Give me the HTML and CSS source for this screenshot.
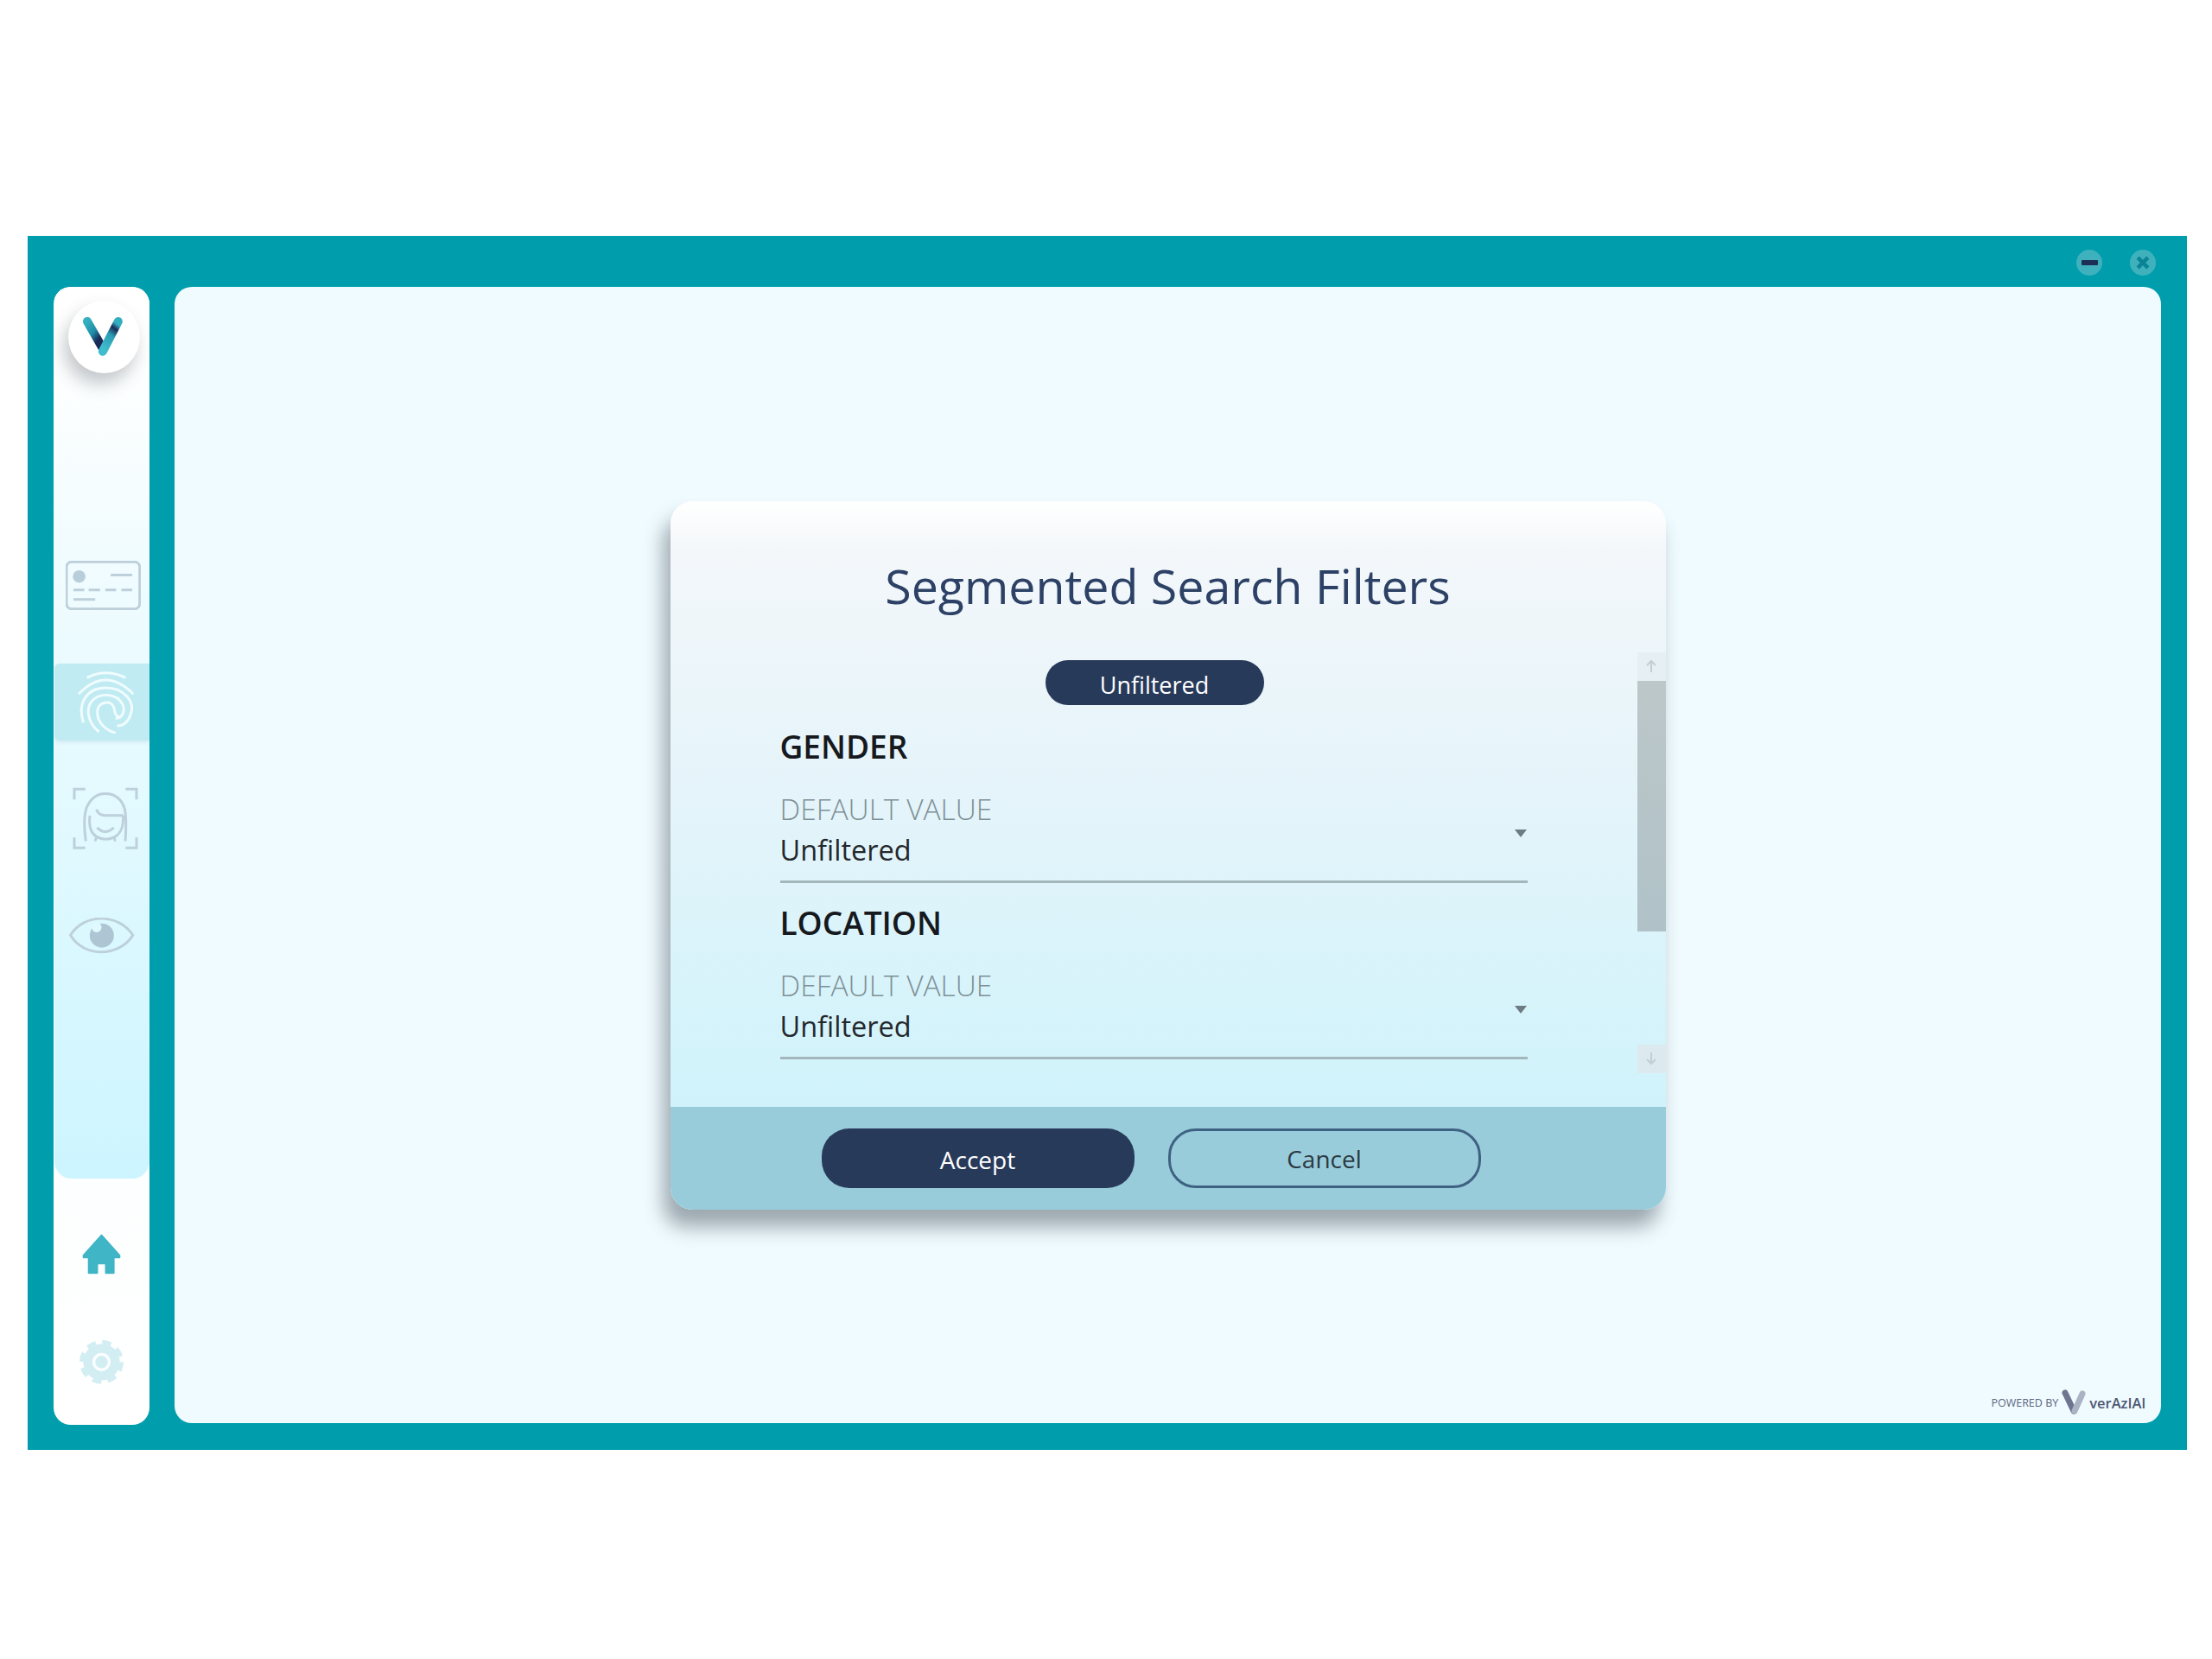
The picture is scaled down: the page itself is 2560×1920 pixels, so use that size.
FILE: index.html
```html
<!DOCTYPE html>
<html lang="en">
<head>
<meta charset="utf-8">
<title>Segmented Search Filters</title>
<link rel="stylesheet" href="styles.css">
</head>
<body>
<div class="window">
  <header class="titlebar">
    <button class="win-btn" aria-label="Minimize"><span class="win-min"></span></button>
    <button class="win-btn" aria-label="Close">
      <svg class="win-close" viewBox="0 0 20 20"><path d="M3.5 3.5 16.5 16.5M16.5 3.5 3.5 16.5"/></svg>
    </button>
  </header>
  <div class="workspace">
    <aside class="sidebar">
      <div class="sidebar-top">
        <div class="logo">
          <svg class="logo-v" viewBox="0 0 50 50">
            <defs>
              <linearGradient id="vl" x1="0" y1="0" x2="0.7" y2="1">
                <stop offset="0" stop-color="#35aebf"/><stop offset="0.45" stop-color="#1f8ea8"/><stop offset="0.78" stop-color="#1a2a58"/><stop offset="1" stop-color="#1a2a58"/>
              </linearGradient>
              <linearGradient id="vr" x1="0.3" y1="1" x2="0.7" y2="0">
                <stop offset="0" stop-color="#3fbccd"/><stop offset="0.55" stop-color="#2b9db4"/><stop offset="0.82" stop-color="#1a2a58"/><stop offset="1" stop-color="#33adc0"/>
              </linearGradient>
            </defs>
            <path d="M8 8 24 36" fill="none" stroke="url(#vl)" stroke-width="9" stroke-linecap="round"/>
            <path d="M24 39 40 8" fill="none" stroke="url(#vr)" stroke-width="9" stroke-linecap="round"/>
          </svg>
        </div>
        <nav class="nav">
          <div class="nav-item">
            <svg class="icon icon-card" viewBox="228 1168 262 170">
              <rect x="231" y="1171" width="255" height="164" rx="18"/>
              <circle class="solid" cx="275" cy="1222" r="22"/>
              <path d="M385 1217h75M255 1269h38M308 1269h40M366 1269h38M422 1269h38M255 1302h76"/>
            </svg>
          </div>
          <div class="nav-item is-active">
            <svg class="icon icon-print" viewBox="266 286 200 220">
              <path d="M300 311Q365 278 435 311"/>
              <path d="M271 368Q365 270 462 368"/>
              <path d="M288 468C265 400 300 346 365 346C430 346 470 395 452 440C445 465 425 480 405 479"/>
              <path d="M342 500C305 470 295 425 315 395C345 360 405 365 425 405C435 430 420 455 400 452"/>
              <path d="M400 504C355 490 330 455 338 420C345 395 380 390 392 410C400 430 395 445 415 448"/>
            </svg>
          </div>
          <div class="nav-item">
            <svg class="icon icon-face" viewBox="252 698 228 218">
              <path d="M258 740V704H296M436 704H474V740M258 872V908H296M474 872V908H436"/>
              <path d="M298 885C292 840 290 800 300 770C315 735 340 720 365 720C395 720 420 735 432 770C440 800 438 840 435 885"/>
              <path d="M335 775C340 790 350 796 365 796H428"/>
              <path d="M312 796C308 830 315 860 340 872C355 880 380 880 395 872C420 860 430 830 427 796"/>
              <path d="M337 838Q365 866 395 838"/>
              <path d="M330 885 335 872M400 885 396 872"/>
            </svg>
          </div>
          <div class="nav-item">
            <svg class="icon icon-eye" viewBox="236 1146 230 126">
              <path d="M243 1207C290 1130 410 1130 460 1207C410 1285 290 1285 243 1207Z"/>
              <circle class="solid" cx="352" cy="1208" r="42"/>
              <circle class="notch" cx="334" cy="1180" r="17"/>
            </svg>
          </div>
        </nav>
      </div>
      <div class="sidebar-bottom">
        <svg class="icon-home" viewBox="288 266 134 140">
          <path d="M355 271 417 340V347H397V401H370V368H340V401H311V347H293V340Z"/>
        </svg>
        <svg class="icon-gear" viewBox="275 628 160 165">
          <circle class="gear-body" cx="355" cy="710" r="64"/>
          <circle class="gear-teeth" cx="355" cy="710" r="70"/>
          <circle class="gear-hole" cx="355" cy="710" r="27"/>
        </svg>
      </div>
    </aside>
    <main class="stage">
      <section class="dialog">
        <div class="dialog-head">
          <h1 class="dialog-title">Segmented Search Filters</h1>
        </div>
        <div class="dialog-body">
          <div class="filters">
            <div class="pill">Unfiltered</div>
            <div class="filter">
              <h2 class="filter-name">GENDER</h2>
              <div class="field">
                <div class="field-text">
                  <div class="field-label">DEFAULT VALUE</div>
                  <div class="field-value">Unfiltered</div>
                </div>
                <span class="caret"></span>
              </div>
            </div>
            <div class="filter">
              <h2 class="filter-name">LOCATION</h2>
              <div class="field">
                <div class="field-text">
                  <div class="field-label">DEFAULT VALUE</div>
                  <div class="field-value">Unfiltered</div>
                </div>
                <span class="caret"></span>
              </div>
            </div>
          </div>
          <div class="scrollbar">
            <div class="scroll-btn">
              <svg class="scroll-arrow" viewBox="0 0 14 16"><path d="M7 15V2M2 7 7 2 12 7"/></svg>
            </div>
            <div class="scroll-thumb"></div>
            <div class="scroll-btn scroll-btn-down">
              <svg class="scroll-arrow" viewBox="0 0 14 16"><path d="M7 1V14M2 9 7 14 12 9"/></svg>
            </div>
          </div>
        </div>
        <footer class="dialog-foot">
          <button class="btn btn-primary">Accept</button>
          <button class="btn btn-outline">Cancel</button>
        </footer>
      </section>
      <div class="powered">
        <span class="powered-by">POWERED BY</span>
        <svg class="powered-v" viewBox="0 0 30 30">
          <path d="M5 4 15 25" stroke="#6d7690"/>
          <path d="M16 25 25 5" stroke="#a9b3c4"/>
        </svg>
        <span class="powered-name">verAzIAl</span>
      </div>
    </main>
  </div>
</div>
</body>
</html>
```
FILE: styles.css
```css
* { box-sizing: border-box; }

html, body { margin: 0; background: #fff; }

body {
  padding: 273px 0 0 32px;
  font-family: "Open Sans", "Noto Sans", sans-serif;
}

.window {
  width: 2499px;
  height: 1405px;
  background: #009eac;
  display: flex;
  flex-direction: column;
  padding: 0 30px 29px 30px;
}

.titlebar {
  height: 59px;
  flex: none;
  display: flex;
  justify-content: flex-end;
  align-items: flex-start;
  gap: 32px;
  padding: 16px 6px 0 0;
}

.win-btn {
  width: 30px;
  height: 30px;
  border: 0;
  padding: 0;
  border-radius: 50%;
  background: #3fb1bd;
  display: flex;
  align-items: center;
  justify-content: center;
}

.win-min {
  width: 19px;
  height: 6px;
  border-radius: 1px;
  background: #1d2f55;
}

.win-close { width: 18px; height: 18px; }
.win-close path { stroke: #0a8494; stroke-width: 5; fill: none; }

.workspace {
  flex: 1;
  display: flex;
  gap: 29px;
  min-height: 0;
}

/* Sidebar */
.sidebar {
  width: 111px;
  flex: none;
  border-radius: 20px;
  background: linear-gradient(#f2fdff, #fff);
  display: flex;
  flex-direction: column;
  overflow: hidden;
}

.sidebar-top {
  height: 1032px;
  flex: none;
  margin-left: 1px;
  padding-top: 16px;
  border-radius: 0 0 20px 20px;
  background: linear-gradient(#fff 7%, #f1fcff 30%, #e4faff 55%, #cdf5ff 100%);
}

.logo {
  width: 83px;
  height: 84px;
  margin-left: 16px;
  border-radius: 50%;
  background: #fff;
  box-shadow: -5px 12px 20px rgba(60, 70, 80, .3);
  display: flex;
  align-items: center;
  justify-content: center;
}

.logo-v { width: 56px; height: 56px; margin-top: 1px; margin-left: -2px; }

.nav {
  margin-top: 201px;
  display: flex;
  flex-direction: column;
  gap: 46px;
}

.nav-item {
  height: 89px;
  display: flex;
  align-items: center;
  justify-content: center;
}

.nav-item.is-active {
  background: #c0ebf2;
  border-radius: 6px 0 0 6px;
  box-shadow: 0 2px 4px rgba(120, 170, 185, .2);
}

.icon { fill: none; stroke: #bdd0db; stroke-width: 9; }
.icon .solid { fill: #b9cedb; stroke: none; }

.icon-card { width: 87px; height: 57px; margin-left: 3px; }
.icon-print { width: 67px; height: 73px; margin-left: 8px; stroke: #f0fcfe; }
.icon-face { width: 76px; height: 73px; margin-left: 8px; }
.icon-eye { width: 77px; height: 42px; margin-left: -2px; }
.icon-eye .solid { fill: #aec6d3; }
.icon-eye .notch { fill: #e0f8ff; stroke: none; }

.sidebar-bottom {
  flex: 1;
  display: flex;
  flex-direction: column;
  align-items: center;
  padding-top: 64px;
  gap: 74px;
}

.icon-home { width: 45px; height: 47px; }
.icon-home path { fill: #3fb5c6; stroke: #3fb5c6; stroke-width: 6; stroke-linejoin: round; }

.icon-gear { width: 53px; height: 55px; }
.gear-body { fill: #d3eef3; }
.gear-teeth { fill: none; stroke: #d3eef3; stroke-width: 14; stroke-dasharray: 32 23; }
.gear-hole { fill: #d3eef3; stroke: #fbfeff; stroke-width: 10; }

/* Main stage */
.stage {
  flex: 1;
  margin-bottom: 2px;
  border-radius: 20px;
  background: #f0fbff;
  position: relative;
  display: flex;
  align-items: center;
  justify-content: center;
}

.dialog {
  width: 1152px;
  height: 820px;
  border-radius: 26px;
  background: linear-gradient(#fff 0, #f3f7fa 7%, #e5f4fa 40%, #d0f3fb 85%);
  box-shadow: -8px 20px 22px rgba(40, 55, 65, .42);
  display: flex;
  flex-direction: column;
  overflow: hidden;
}

.dialog-head {
  height: 175px;
  flex: none;
  padding-top: 61px;
  text-align: center;
}

.dialog-title {
  margin: 0;
  font-size: 55.5px;
  line-height: 74px;
  font-weight: 400;
  color: #2c4165;
}

.dialog-body {
  flex: 1;
  display: flex;
  min-height: 0;
}

.filters {
  flex: 1;
  padding: 9px 127px 0 127px;
}

.pill {
  width: 253px;
  height: 52px;
  margin: 0 0 26px 307px;
  border-radius: 26px;
  background: #283a5a;
  color: #fff;
  font-size: 27px;
  line-height: 57px;
  text-align: center;
}

.filter + .filter { margin-top: 24px; }

.filter-name {
  margin: 0 0 28px;
  font-size: 37px;
  line-height: 43px;
  font-weight: 600;
  color: #16191d;
}

.field {
  display: flex;
  align-items: center;
  justify-content: space-between;
  padding-bottom: 11px;
  border-bottom: 3px solid #a2b6bb;
}

.field-label {
  font-size: 33.5px;
  line-height: 46px;
  font-weight: 300;
  color: #7e9096;
}

.field-value {
  font-size: 32.5px;
  line-height: 49px;
  color: #24282c;
}

.caret {
  width: 0;
  height: 0;
  margin: 8px 1px 0 0;
  border-left: 7px solid transparent;
  border-right: 7px solid transparent;
  border-top: 9px solid #6d7b82;
}

.scrollbar {
  width: 33px;
  height: 487px;
  flex: none;
  display: flex;
  flex-direction: column;
}

.scroll-btn {
  height: 33px;
  flex: none;
  background: #e6eff3;
  display: flex;
  align-items: center;
  justify-content: center;
}

.scroll-btn-down { background: #dceaef; margin-top: 131px; }

.scroll-arrow { width: 14px; height: 16px; }
.scroll-arrow path { fill: none; stroke: #c3ced3; stroke-width: 2; }

.scroll-thumb {
  height: 290px;
  flex: none;
  background: linear-gradient(#bcc7c9, #b0c2c8);
}

.dialog-foot {
  height: 119px;
  flex: none;
  padding: 25px 0 0 175px;
  background: #98ccda;
  display: flex;
  align-items: flex-start;
  gap: 39px;
}

.btn {
  width: 362px;
  height: 69px;
  border-radius: 32px;
  font-family: inherit;
  font-size: 28px;
  padding: 3px 0 0;
}

.btn-primary { border: 0; background: #283a5a; color: #fff; }
.btn-outline { border: 3px solid #3f6283; background: transparent; color: #2c3a44; padding-top: 2px; }

/* Powered by */
.powered {
  position: absolute;
  right: 18px;
  bottom: 9px;
  display: flex;
  align-items: center;
  gap: 3px;
  color: #5b6580;
}

.powered-by { font-size: 12.5px; }
.powered-v { width: 30px; height: 30px; }
.powered-v path { fill: none; stroke-width: 7; stroke-linecap: round; }
.powered-name { font-size: 16.5px; font-weight: 600; color: #4d5873; }
```
